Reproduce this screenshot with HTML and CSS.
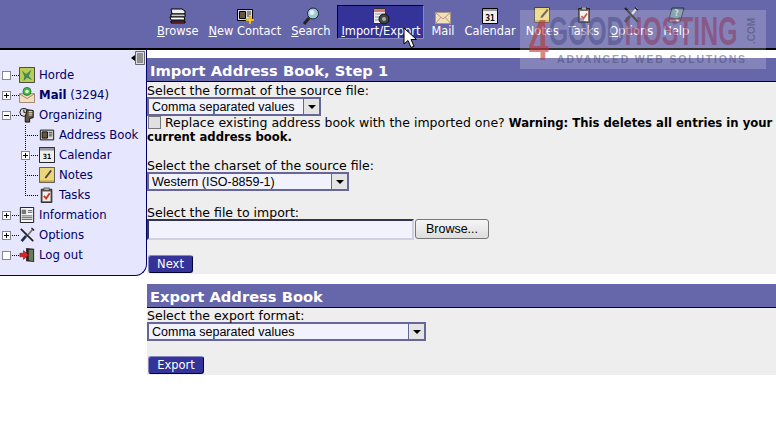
FILE: index.html
```html
<!DOCTYPE html>
<html lang="en">
<head>
    <meta charset="UTF-8">
    <meta name="viewport" content="width=device-width, initial-scale=1.0">
    <title>Import/Export</title>
    <link rel="stylesheet" href="styles.css">
</head>
<body>
    <header class="topbar">
        <nav class="menu">
            <a class="menu-item">
                <svg width="22" height="18" viewBox="0 0 22 18"><path d="M4 2h11l3 2v3H5z" fill="#eee" stroke="#000"/><path d="M4 7h14v3H4z" fill="#ccc" stroke="#000"/><path d="M3 10h14l1 3H4z" fill="#fff" stroke="#000"/><path d="M4 14h14v2H4z" fill="#a33" stroke="#000"/></svg>
                <span><u>B</u>rowse</span>
            </a>
            <a class="menu-item">
                <svg width="18" height="18" viewBox="0 0 18 18"><path d="M1.500 2.500h15v11h-15z" fill="#ddd" stroke="#000"/><path d="M3.500 4.500h6v7h-6z" fill="#654" stroke="#000"/><path d="M11 5h4M11 7h4M11 9h2" stroke="#333"/><path d="M13 9h2v3h3v2h-3v3h-2v-3h-3v-2h3z" fill="#fc3" stroke="#a80" stroke-width=".5"/></svg>
                <span><u>N</u>ew Contact</span>
            </a>
            <a class="menu-item">
                <svg width="18" height="18" viewBox="0 0 18 18"><circle cx="11" cy="6.500" r="5.500" fill="#9cc" stroke="#223"/><circle cx="10" cy="5.500" r="2.500" fill="#def"/><path d="M7 11l-5 6" stroke="#222" stroke-width="3"/></svg>
                <span><u>S</u>earch</span>
            </a>
            <a class="menu-item menu-active">
                <svg width="18" height="18" viewBox="0 0 18 18"><path d="M1.500 1.500h12v15h-12z" fill="#eee" stroke="#333"/><path d="M2 2h11v3H2z" fill="#d77"/><path d="M3 7h8M3 10h5M3 13h5" stroke="#89a"/><circle cx="12" cy="12" r="5" fill="#444" stroke="#111"/><circle cx="12" cy="12" r="2" fill="#aaa"/></svg>
                <span><u>I</u>mport/Export</span>
            </a>
            <a class="menu-item">
                <svg width="18" height="18" viewBox="0 0 18 18"><path d="M1.500 5.500h15v11h-15z" fill="#f3dfc0" stroke="#a98"/><path d="M2 6l7 6 7-6M2 16l5-6M16 16l-5-6" fill="none" stroke="#b97"/></svg>
                <span>Mail</span>
            </a>
            <a class="menu-item">
                <svg width="18" height="18" viewBox="0 0 18 18"><path d="M1.500 1.500h15v15h-15z" fill="#eee" stroke="#000"/><path d="M2 2h14v2H2z" fill="#999"/><text x="9" y="13.500" class="cal-day">31</text></svg>
                <span>Calendar</span>
            </a>
            <a class="menu-item">
                <svg width="18" height="18" viewBox="0 0 18 18"><path d="M1.500 .5h15v15h-15z" fill="#ecd67c" stroke="#444"/><path d="M2 13h14v2H2z" fill="#c9ac4c"/><path d="M8 9l6-7 1.500 1.500-6 7-2 .5z" fill="#543"/></svg>
                <span>Notes</span>
            </a>
            <a class="menu-item">
                <svg width="18" height="18" viewBox="0 0 18 18"><path d="M3.500 1.500h11v14h-11z" fill="#654" stroke="#222"/><path d="M5 4h8v10H5z" fill="#eee"/><path d="M6.500 0h5v3h-5z" fill="#aaa" stroke="#222" stroke-width=".6"/><path d="M6.500 9l2 2.500 3.500-5" fill="none" stroke="#c32" stroke-width="1.800"/></svg>
                <span>Tasks</span>
            </a>
            <a class="menu-item">
                <svg width="18" height="18" viewBox="0 0 18 18"><path d="M3 1l13 14" stroke="#222" stroke-width="2"/><path d="M15 1l-5 6" stroke="#ddd" stroke-width="2"/><path d="M8 9l-5 6" stroke="#234" stroke-width="3"/><path d="M13 .5l3 3" stroke="#222" stroke-width="1.500"/></svg>
                <span><u>O</u>ptions</span>
            </a>
            <a class="menu-item">
                <svg width="18" height="18" viewBox="0 0 18 18"><path d="M5 1h12l-3 11H2z" fill="#6b8e9e" stroke="#234"/><path d="M2 12h12l-1 3H2z" fill="#ddd" stroke="#234"/><text x="9.500" y="9" class="help-mark">?</text></svg>
                <span>Help</span>
            </a>
        </nav>
    </header>

    <div class="layout">
        <aside class="sidebar">
            <div class="collapse">
                <svg width="16" height="15" viewBox="0 0 16 15"><path d="M1 7l4-3v6z" fill="#000"/><path d="M5.500 .5h9v13h-9z" fill="#ddd" stroke="#666"/><path d="M7 3h6M7 5h6M7 7h6M7 9h6M7 11h6" stroke="#444"/></svg>
            </div>
            <ul class="tree">
                <li class="tree-row">
                    <span class="branch"><i class="toggle"></i></span>
                    <svg class="tree-icon" viewBox="0 0 18 18"><path d="M.5 .5h17v17H.5z" fill="#bc5" stroke="#333"/><path d="M3 4l5 4 6-5-3 7 4 5-6-3-4 4 1-6z" fill="#485"/></svg>
                    <a>Horde</a>
                </li>
                <li class="tree-row">
                    <span class="branch"><i class="toggle plus"></i></span>
                    <svg class="tree-icon" viewBox="0 0 18 18"><path d="M.5 7.500h17v10H.5z" fill="#f3dfc0" stroke="#976"/><path d="M1 8l8 5 8-5" fill="none" stroke="#976"/><circle cx="9" cy="5" r="4.500" fill="#4b4" stroke="#272"/><circle cx="9" cy="5" r="2" fill="#dfd"/></svg>
                    <a><b>Mail</b> (3294)</a>
                </li>
                <li class="tree-row">
                    <span class="branch"><i class="toggle minus"></i></span>
                    <svg class="tree-icon" viewBox="0 0 18 18"><circle cx="5.500" cy="6" r="4.500" fill="#ddd" stroke="#000"/><path d="M5.500 3v3h2" fill="none" stroke="#000"/><path d="M9 3l7 1v8l-4 1v4H7v-6z" fill="#654" stroke="#000"/><path d="M11 5h4M11 7h4M11 9h4" stroke="#eee"/></svg>
                    <a>Organizing</a>
                </li>
                <li class="tree-row sub">
                    <span class="branch"></span>
                    <svg class="tree-icon" viewBox="0 0 18 18"><path d="M1.500 3.500h15v11h-15z" fill="#ddd" stroke="#000"/><path d="M3.500 5.500h6v7h-6z" fill="#654" stroke="#000"/><path d="M11 6h4M11 8h4M11 10h4" stroke="#333"/></svg>
                    <a>Address Book</a>
                </li>
                <li class="tree-row sub">
                    <span class="branch"><i class="toggle plus"></i></span>
                    <svg class="tree-icon" viewBox="0 0 18 18"><path d="M.5 .5h17v17H.5z" fill="#eee" stroke="#000"/><path d="M1 1h16v3H1z" fill="#999"/><text x="9" y="14" class="cal-day">31</text></svg>
                    <a>Calendar</a>
                </li>
                <li class="tree-row sub">
                    <span class="branch"></span>
                    <svg class="tree-icon" viewBox="0 0 18 18"><path d="M.5 .5h17v17H.5z" fill="#ecd67c" stroke="#444"/><path d="M1 15h16v2H1z" fill="#c9ac4c"/><path d="M7 11l6-8 1.500 1.500-6 8-2 .5z" fill="#543"/></svg>
                    <a>Notes</a>
                </li>
                <li class="tree-row sub last">
                    <span class="branch"></span>
                    <svg class="tree-icon" viewBox="0 0 18 18"><path d="M2.500 2.500h12v15h-12z" fill="#654" stroke="#222"/><path d="M4 5h9v11H4z" fill="#eee"/><path d="M5.500 1h6v3h-6z" fill="#aaa" stroke="#222" stroke-width=".6"/><path d="M5.500 10l2.500 3 4-6" fill="none" stroke="#c32" stroke-width="2"/></svg>
                    <a>Tasks</a>
                </li>
                <li class="tree-row">
                    <span class="branch"><i class="toggle plus"></i></span>
                    <svg class="tree-icon" viewBox="0 0 18 18"><path d="M1.500 .5h15v17h-15z" fill="#f4f4f4" stroke="#000"/><path d="M3 3h5v5H3z" fill="#777"/><path d="M10 4h5M10 6h5M3 10h12M3 12h12M3 14h12" stroke="#555"/></svg>
                    <a>Information</a>
                </li>
                <li class="tree-row">
                    <span class="branch"><i class="toggle plus"></i></span>
                    <svg class="tree-icon" viewBox="0 0 18 18"><path d="M2 2l14 14" stroke="#222" stroke-width="2"/><path d="M16 2l-6 7" stroke="#777" stroke-width="2"/><path d="M8 10l-5 6" stroke="#234" stroke-width="3"/><path d="M14 1l3 3" stroke="#222" stroke-width="1.500"/></svg>
                    <a>Options</a>
                </li>
                <li class="tree-row">
                    <span class="branch"><i class="toggle"></i></span>
                    <svg class="tree-icon" viewBox="0 0 18 18"><path d="M8 1l9 1v15l-9-1z" fill="#222"/><path d="M11 3l5 0v13l-5-1z" fill="#6a7a5a"/><path d="M1 7h4V4l6 5-6 5v-3H1z" fill="#d22" stroke="#611" stroke-width=".6"/></svg>
                    <a>Log out</a>
                </li>
            </ul>
        </aside>

        <main class="content">
            <section class="panel">
                <h2 class="panel-title">Import Address Book, Step 1</h2>
                <form class="panel-body panel-import">
                    <label class="field-label">Select the format of the source file:</label>
                    <div class="picker picker-format">
                        <select><option>Comma separated values</option></select>
                        <span class="picker-arrow"></span>
                    </div>
                    <div class="replace">
                        <input type="checkbox">
                        Replace existing address book with the imported one? <b>Warning: This deletes all entries in your current address book.</b>
                    </div>
                    <label class="field-label spaced">Select the charset of the source file:</label>
                    <div class="picker picker-charset">
                        <select><option>Western (ISO-8859-1)</option></select>
                        <span class="picker-arrow"></span>
                    </div>
                    <label class="field-label spaced">Select the file to import:</label>
                    <div class="file-row">
                        <input class="file-path" type="text">
                        <button class="browse" type="button">Browse...</button>
                    </div>
                    <button class="action" type="button">Next</button>
                </form>
            </section>

            <section class="panel panel-second">
                <h2 class="panel-title">Export Address Book</h2>
                <form class="panel-body panel-export">
                    <label class="field-label">Select the export format:</label>
                    <div class="picker picker-export">
                        <select><option>Comma separated values</option></select>
                        <span class="picker-arrow"></span>
                    </div>
                    <button class="action action-export" type="button">Export</button>
                </form>
            </section>
        </main>
    </div>

    <div class="watermark">
        <div class="wm-logo"><span class="wm-four">4</span><span class="wm-good">GOOD</span><span class="wm-host">HOSTING</span></div>
        <div class="wm-com">.COM</div>
        <div class="wm-tag">ADVANCED WEB SOLUTIONS</div>
    </div>

    <svg class="pointer" width="16" height="22" viewBox="0 0 16 22"><path d="M1 1v16l4-3.500 3 7 3-1.300-3-6.700h5.500z" fill="#fff" stroke="#000"/></svg>
</body>
</html>
```

FILE: styles.css
```css
* {
    box-sizing: border-box;
}
body {
    margin: 0;
    background: white;
    font-family: "DejaVu Sans", Verdana, sans-serif;
    font-size: 12.500px;
    color: black;
    overflow: hidden;
}
.topbar {
    height: 50px;
    background: #6666aa;
    border-bottom: 2px solid black;
    padding: 5px 0 0 154px;
}
.menu {
    display: flex;
    gap: 4px;
}
.menu-item {
    display: flex;
    flex-direction: column;
    align-items: center;
    height: 34px;
    padding: 1px 2px 0;
    border: 1px solid transparent;
    color: white;
    font-size: 11.400px;
    line-height: 12px;
    white-space: nowrap;
}
.menu-item svg {
    flex-shrink: 0;
}
.menu-active {
    padding: 1px 3px 0;
    margin-left: 0;
    background: #333399;
    border-color: #000033 #8888bb #8888bb #000033;
}
.cal-day {
    font: bold 8px "DejaVu Sans Mono", monospace;
    text-anchor: middle;
    fill: black;
}
.help-mark {
    font: bold 8px "DejaVu Sans", sans-serif;
    text-anchor: middle;
    fill: #ccd;
}
.layout {
    display: flex;
    align-items: flex-start;
}
.sidebar {
    width: 147px;
    height: 226px;
    flex-shrink: 0;
    background: #e6e6ff;
    border-right: 1px solid #000066;
    border-bottom: 1px solid #000066;
    border-bottom-right-radius: 12px;
    padding-top: 1px;
}
.collapse {
    display: flex;
    justify-content: flex-end;
    height: 14px;
}
.tree {
    list-style: none;
    margin: 0;
    padding: 0;
}
.tree-row {
    display: flex;
    align-items: center;
    height: 20px;
    padding-left: 2px;
    color: #000066;
    white-space: nowrap;
}
.tree-row a {
    margin-left: 4px;
    font-size: 11.700px;
}
.tree-icon {
    width: 16px;
    height: 16px;
    flex-shrink: 0;
}
.branch {
    display: flex;
    align-items: center;
    width: 17px;
    height: 20px;
    background: repeating-linear-gradient(to right, #000 0 1px, transparent 1px 2px) left center / 100% 1px no-repeat;
}
.sub {
    padding-left: 21px;
}
.sub .branch {
    width: 18px;
    background:
        repeating-linear-gradient(to bottom, #000 0 1px, transparent 1px 2px) 4px top / 1px 100% no-repeat,
        repeating-linear-gradient(to right, #000 0 1px, transparent 1px 2px) 4px center / 14px 1px no-repeat;
}
.sub.last .branch {
    background:
        repeating-linear-gradient(to bottom, #000 0 1px, transparent 1px 2px) 4px top / 1px 50% no-repeat,
        repeating-linear-gradient(to right, #000 0 1px, transparent 1px 2px) 4px center / 14px 1px no-repeat;
}
.toggle {
    width: 9px;
    height: 9px;
    background-color: white;
    border: 1px solid #888;
}
.toggle.plus {
    background-image: linear-gradient(black, black), linear-gradient(black, black);
    background-size: 5px 1px, 1px 5px;
    background-position: center;
    background-repeat: no-repeat;
}
.toggle.minus {
    background-image: linear-gradient(black, black);
    background-size: 5px 1px;
    background-position: center;
    background-repeat: no-repeat;
}
.content {
    flex: 1;
    padding-top: 8px;
    min-width: 0;
}
.panel-second {
    margin-top: 10px;
}
.panel-title {
    margin: 0;
    height: 24px;
    background: #6666aa;
    border-bottom: 1px solid black;
    color: white;
    font-size: 14.700px;
    line-height: 25px;
    padding-left: 3px;
}
.panel-body {
    background: #eeeeee;
    line-height: 14px;
}
.panel-import {
    height: 192px;
    padding-top: 2px;
}
.panel-export {
    height: 67px;
    padding-top: 1px;
}
.field-label {
    display: block;
    height: 13px;
}
.spaced {
    margin-top: 15px;
}
.picker {
    display: flex;
    height: 19px;
    border: 2px solid #666699;
    background: #f2f2fc;
}
.picker select {
    flex: 1;
    min-width: 0;
    appearance: none;
    border: 0;
    outline: 0;
    background: transparent;
    padding: 0 0 0 3px;
    color: black;
    font-family: "Liberation Sans", Arial, sans-serif;
    font-size: 12.500px;
}
.picker-arrow {
    display: flex;
    align-items: center;
    justify-content: center;
    width: 16px;
    background: #e4e4e4;
    border-left: 1px solid #666699;
}
.picker-arrow::after {
    content: "";
    border-top: 4px solid black;
    border-left: 4px solid transparent;
    border-right: 4px solid transparent;
}
.picker-format {
    width: 174px;
}
.picker-charset {
    width: 202px;
}
.picker-export {
    width: 279px;
}
.replace {
    margin-bottom: 1px;
}
.replace b {
    font-size: 11.650px;
}
.replace input {
    width: 13px;
    height: 13px;
    margin: 0 0 0 1px;
    vertical-align: -2px;
    appearance: none;
    background: #e0e0e0;
    border: 1px solid #777;
}
.file-row {
    display: flex;
    align-items: flex-start;
    gap: 1px;
}
.file-path {
    width: 267px;
    height: 21px;
    background: #f2f2fc;
    border: 2px solid;
    border-color: #333355 #d0d0e4 #d0d0e4 #333355;
    outline: 0;
}
.browse {
    width: 74px;
    height: 20px;
    padding: 0;
    background: linear-gradient(#f6f6f6, #dddddd);
    border: 1px solid #777;
    border-radius: 3px;
    font-family: "Liberation Sans", Arial, sans-serif;
    font-size: 12.500px;
    color: black;
}
.action {
    display: block;
    width: 45px;
    height: 18px;
    margin: 15px 0 0 1px;
    padding: 0;
    background: #333399;
    border: 1px solid;
    border-color: #8888bb #000033 #000033 #8888bb;
    border-radius: 3px;
    color: white;
    font-family: "DejaVu Sans", Verdana, sans-serif;
    font-size: 11.500px;
}
.action-export {
    width: 56px;
}
.watermark {
    position: absolute;
    left: 520px;
    top: 10px;
    width: 246px;
    height: 59px;
    background: rgba(255, 255, 255, 0.2);
}
.wm-logo {
    display: flex;
    align-items: flex-start;
    width: 360px;
    height: 43px;
    padding-left: 14px;
    font-family: "Liberation Sans", Arial, sans-serif;
    font-weight: bold;
    font-size: 40px;
    line-height: 43px;
    transform: scaleX(0.62);
    transform-origin: left top;
}
.wm-four {
    color: rgba(190, 50, 50, 0.6);
    font-size: 58px;
    line-height: 60px;
}
.wm-good {
    color: rgba(70, 70, 130, 0.5);
}
.wm-host {
    color: rgba(140, 60, 100, 0.6);
}
.wm-com {
    position: absolute;
    left: 226px;
    top: 8px;
    color: rgba(70, 70, 110, 0.5);
    font-family: "Liberation Sans", Arial, sans-serif;
    font-size: 10px;
    font-weight: bold;
    line-height: 12px;
    writing-mode: vertical-rl;
    transform: rotate(180deg);
}
.wm-tag {
    padding-left: 37px;
    color: rgba(70, 70, 110, 0.5);
    font-family: "Liberation Sans", Arial, sans-serif;
    font-size: 10.500px;
    font-weight: bold;
    letter-spacing: 1.800px;
    white-space: nowrap;
}
.pointer {
    position: absolute;
    left: 403px;
    top: 27px;
}
```
